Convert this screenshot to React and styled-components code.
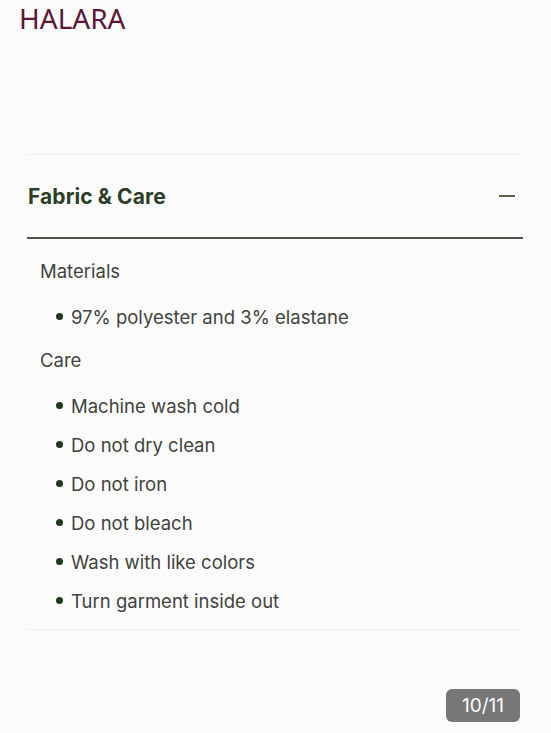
import React from 'react'
import styled, { createGlobalStyle } from 'styled-components'

const Global = createGlobalStyle`
  html, body {
    margin: 0;
    padding: 0;
    background: #fbfbfb;
  }
  body {
    font-family: "Inter", "Noto Sans", sans-serif;
    -webkit-font-smoothing: antialiased;
  }
`

const Page = styled.div`
  position: relative;
  height: 733px;
  overflow: hidden;
`

const Logo = styled.div`
  padding: 0 0 0 19px;
  height: 39px;
  font-family: "Noto Sans", sans-serif;
  font-size: 28px;
  line-height: 36px;
  color: #5b1733;
`

const Accordion = styled.section`
  margin: 115px 28px 0 27px;
  border-top: 1px solid #efefef;
  border-bottom: 1px solid #efefef;
`

const Header = styled.div`
  display: flex;
  align-items: center;
  justify-content: space-between;
  height: 82px;
  border-bottom: 2px solid #4b5447;
`

const Title = styled.h3`
  margin: 0 0 0 1px;
  font-size: 21px;
  font-weight: 700;
  color: #2c3f26;
  letter-spacing: 0.1px;
`

const Minus = styled.span`
  width: 16px;
  height: 1.5px;
  background: #56604f;
  margin-right: 8px;
`

const Body = styled.div`
  padding: 13px 0 9px 13px;
`

const Label = styled.div`
  font-size: 18.5px;
  line-height: 39px;
  height: 45px;
  color: #3f433c;
`

const List = styled.ul`
  list-style: none;
  margin: 0 0 0 16px;
  padding: 0;
`

const Item = styled.li`
  display: flex;
  align-items: center;
  height: 39px;
  font-size: 18.5px;
  color: #3f433c;
  &:before {
    content: '';
    flex-shrink: 0;
    width: 7px;
    height: 7px;
    border-radius: 50%;
    background: #1f3a1c;
    margin-right: 8px;
  }
`

const Group = styled.div`
  margin-bottom: ${p => p.gap || 0}px;
`

const Counter = styled.div`
  position: absolute;
  right: 31px;
  bottom: 11px;
  width: 74px;
  height: 33px;
  border-radius: 6px;
  background: #777777;
  color: #ffffff;
  font-size: 19px;
  display: flex;
  align-items: center;
  justify-content: center;
`

const care = [
  'Machine wash cold',
  'Do not dry clean',
  'Do not iron',
  'Do not bleach',
  'Wash with like colors',
  'Turn garment inside out',
]

export default function App() {
  return (
    <Page>
      <Global />
      <Logo>HALARA</Logo>
      <Accordion>
        <Header>
          <Title>Fabric &amp; Care</Title>
          <Minus />
        </Header>
        <Body>
          <Group gap={5}>
            <Label>Materials</Label>
            <List>
              <Item>97% polyester and 3% elastane</Item>
            </List>
          </Group>
          <Group>
            <Label>Care</Label>
            <List>
              {care.map(c => <Item key={c}>{c}</Item>)}
            </List>
          </Group>
        </Body>
      </Accordion>
      <Counter>10/11</Counter>
    </Page>
  )
}
